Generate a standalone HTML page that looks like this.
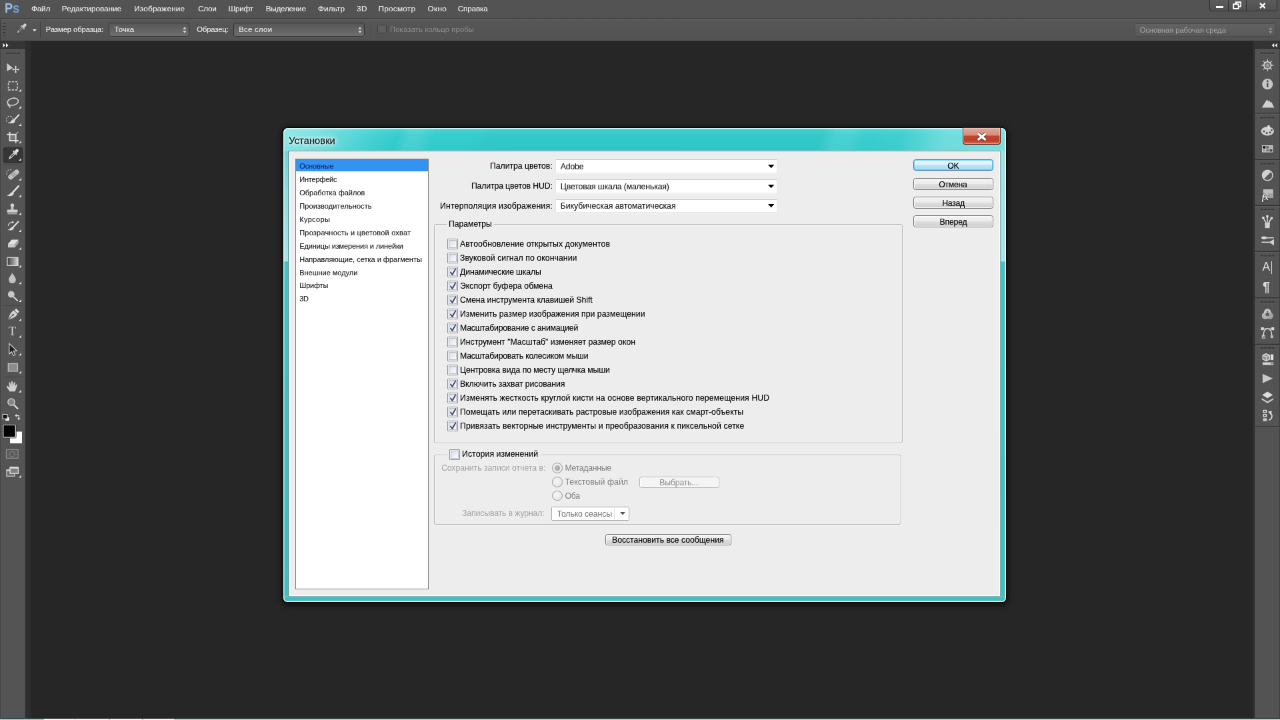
<!DOCTYPE html>
<html lang="ru"><head><meta charset="utf-8"><title>Установки</title>
<style>
*{box-sizing:border-box;margin:0;padding:0}
html,body{width:1280px;height:720px;overflow:hidden;background:#282828}
body{font-family:"Liberation Sans",sans-serif}
#root{position:absolute;left:0;top:0;width:1920px;height:1080px;transform:scale(0.6666667);transform-origin:0 0;overflow:hidden;background:#262626;will-change:transform}
#root div,#root svg{position:absolute}
.t{white-space:nowrap;line-height:21px;font-size:12px;color:#000}
.m{color:#f0f0f0;font-size:11.8px;-webkit-text-stroke:0.1px #f0f0f0}
.o{color:#eeeeee;font-size:11.3px;-webkit-text-stroke:0.1px #eee}
.od{color:#8e8e8e;font-size:11.3px}
.d,.b{font-size:12.3px;color:#000;-webkit-text-stroke:0.12px #000}
.dg{font-size:12.3px;color:#a3a3a3}
.l{font-size:11px;color:#000;-webkit-text-stroke:0.12px #111}
.tt{font-size:14.6px;color:#10262a}
.dis{color:#8c8c8c}
</style></head>
<body>
<div id="root">
<div style="left:0px;top:0px;width:1920px;height:27.3px;background:#535353"></div>
<div style="left:0px;top:27px;width:1920px;height:1.27px;background:#373737"></div>
<div style="left:0px;top:28.28px;width:1920px;height:1.27px;background:#6a6a6a"></div>
<div style="left:0px;top:29.4px;width:1920px;height:32.1px;background:linear-gradient(#575757,#525252)"></div>
<div style="left:0px;top:60.9px;width:1920px;height:1.05px;background:#2e2e2e"></div>
<div style="left:0px;top:29.4px;width:1.2px;height:32.1px;background:#3c3c3c"></div>
<div class="t" style="top:1.05px;left:7.05px;font-weight:bold;font-size:21px;transform:scaleX(0.86);transform-origin:0 50%;-webkit-text-stroke:0.3px #7aa5d8"><span style="color:#9bbde8">P</span><span style="color:#6e9bd0">s</span></div>
<div class="t m" style="top:2.85px;letter-spacing:-0.27px;left:47.1px;">Файл</div>
<div class="t m" style="top:2.85px;letter-spacing:-0.05px;left:92.85px;">Редактирование</div>
<div class="t m" style="top:2.85px;letter-spacing:0.17px;left:201.15px;">Изображение</div>
<div class="t m" style="top:2.85px;letter-spacing:-0.32px;left:297.15px;">Слои</div>
<div class="t m" style="top:2.85px;letter-spacing:-0.32px;left:342.45px;">Шрифт</div>
<div class="t m" style="top:2.85px;letter-spacing:-0.28px;left:398.7px;">Выделение</div>
<div class="t m" style="top:2.85px;letter-spacing:0.11px;left:477px;">Фильтр</div>
<div class="t m" style="top:2.85px;letter-spacing:0.32px;left:535.05px;">3D</div>
<div class="t m" style="top:2.85px;letter-spacing:0.21px;left:567.6px;">Просмотр</div>
<div class="t m" style="top:2.85px;letter-spacing:0.31px;left:641.55px;">Окно</div>
<div class="t m" style="top:2.85px;letter-spacing:-0.21px;left:686.7px;">Справка</div>
<div style="left:1814.4px;top:-1.5px;width:102px;height:18.9px;border:1px solid #2f2f2f;border-radius:0 0 3px 3px;background:linear-gradient(#5c5c5c,#505050)"></div>
<div style="left:1842.3px;top:0px;width:1.2px;height:16.95px;background:#2f2f2f"></div>
<div style="left:1869px;top:0px;width:1.2px;height:16.95px;background:#2f2f2f"></div>
<div style="left:1824px;top:9px;width:10.5px;height:2.55px;background:#fff"></div>
<svg style="left:1849.35px;top:2.25px;" width="12.9" height="11.4" viewBox="0 0 8.6 7.6"><path d="M3.2 0.8h5v4.4h-5z" fill="none" stroke="#fff" stroke-width="1.3"/><path d="M0.8 2.9h5v4.4h-5z" fill="#555" stroke="#fff" stroke-width="1.3"/></svg>
<svg style="left:1888.5px;top:3.9px;" width="9.6" height="9" viewBox="0 0 6.4 6"><path d="M0.6 0.6 L5.8 5.4 M5.8 0.6 L0.6 5.4" stroke="#fff" stroke-width="1.5" fill="none"/></svg>
<div style="left:4.35px;top:34.5px;width:3.3px;height:1.95px;background:#383838"></div>
<div style="left:4.35px;top:39px;width:3.3px;height:1.95px;background:#383838"></div>
<div style="left:4.35px;top:43.5px;width:3.3px;height:1.95px;background:#383838"></div>
<div style="left:4.35px;top:48px;width:3.3px;height:1.95px;background:#383838"></div>
<div style="left:4.35px;top:52.5px;width:3.3px;height:1.95px;background:#383838"></div>
<svg style="left:22.5px;top:33.75px;" width="18" height="18" viewBox="0 0 12 12"><g transform="rotate(45 6 6)"><rect x="4.6" y="-0.6" width="2.8" height="4.2" rx="1.2" fill="#cfcfcf"/><rect x="3.6" y="3.2" width="4.8" height="1.6" fill="#bdbdbd"/><path d="M4.9 4.8h2.2v5.6l-1.1 2.2-1.1-2.2z" fill="#c4c4c4" stroke="#3a3a3a" stroke-width="0.5"/><path d="M6 5.4v4.4" stroke="#333" stroke-width="0.8"/></g></svg>
<svg style="left:48.9px;top:43.5px;" width="5.7" height="3.3" viewBox="0 0 3.8 2.2"><path d="M0 0h3.8L1.9 2.2z" fill="#e8e8e8"/></svg>
<div style="left:60.3px;top:33px;width:1.05px;height:22.5px;background:#3a3a3a"></div>
<div style="left:61.35px;top:33px;width:1.05px;height:22.5px;background:#5c5c5c"></div>
<div class="t o" style="top:33.9px;letter-spacing:-0.12px;left:68.85px;">Размер образца:</div>
<div style="left:163.05px;top:33.9px;width:120.6px;height:20.7px;border:1px solid #303030;border-radius:3.5px;background:linear-gradient(#575757,#6d6d6d);box-shadow:0 1px 0 rgba(255,255,255,0.10)"></div>
<div class="t o" style="top:33.9px;letter-spacing:0.03px;left:171.6px;">Точка</div>
<svg style="left:272.64px;top:38.91px;" width="7.92" height="11.88" viewBox="0 0 6 9"><path d="M3 0.9 L5 3.6 H1Z M3 8.1 L5 5.4 H1Z" fill="#d8d8d8"/></svg>
<div class="t o" style="top:33.9px;letter-spacing:-0.18px;left:295.35px;">Образец:</div>
<div style="left:350.25px;top:33.9px;width:196.5px;height:20.7px;border:1px solid #303030;border-radius:3.5px;background:linear-gradient(#575757,#6d6d6d);box-shadow:0 1px 0 rgba(255,255,255,0.10)"></div>
<div class="t o" style="top:33.9px;letter-spacing:0.32px;left:358.2px;">Все слои</div>
<svg style="left:535.59px;top:38.91px;" width="7.92" height="11.88" viewBox="0 0 6 9"><path d="M3 0.9 L5 3.6 H1Z M3 8.1 L5 5.4 H1Z" fill="#d8d8d8"/></svg>
<div style="left:555.9px;top:33px;width:1.05px;height:22.5px;background:#3a3a3a"></div>
<div style="left:556.95px;top:33px;width:1.05px;height:22.5px;background:#5c5c5c"></div>
<div style="left:566.1px;top:36.9px;width:14.1px;height:13.5px;border:1px solid #3c3c3c;border-radius:1.5px;background:#5e5e5e"></div>
<div class="t od" style="top:33.9px;letter-spacing:0.11px;left:585px;">Показать кольцо пробы</div>
<div style="left:1702.2px;top:35.4px;width:210.6px;height:19.2px;border:1px solid #4a4a4a;border-radius:2px;background:linear-gradient(#626262,#595959)"></div>
<div class="t od" style="top:34.5px;letter-spacing:-0.13px;left:1709.7px;color:#a8a8a8">Основная рабочая среда</div>
<svg style="left:1901.78px;top:39.56px;" width="7.65" height="11.47" viewBox="0 0 6 9"><path d="M3 0.9 L5 3.6 H1Z M3 8.1 L5 5.4 H1Z" fill="#9a9a9a"/></svg>
<div style="left:0px;top:1077.15px;width:1920px;height:0.75px;background:#1c1c1c"></div>
<div style="left:0px;top:1077.9px;width:1920px;height:2.1px;background:linear-gradient(#79c7c7,#a9dede)"></div>
<div style="left:0px;top:1077.9px;width:66px;height:2.1px;background:linear-gradient(#63c5c5,#8fdada)"></div>
<div style="left:66px;top:1077.9px;width:45.9px;height:2.1px;background:#eef6f6"></div>
<div style="left:113.4px;top:1077.9px;width:49.8px;height:2.1px;background:#eef6f6"></div>
<div style="left:164.7px;top:1077.9px;width:48.3px;height:2.1px;background:#eef6f6"></div>
<div style="left:214.5px;top:1077.9px;width:46.5px;height:2.1px;background:#eef6f6"></div>
<div style="left:0px;top:61.5px;width:37.95px;height:1015.5px;background:#545454"></div>
<div style="left:0px;top:61.5px;width:1.35px;height:1015.5px;background:#3f3f3f"></div>
<div style="left:1.35px;top:72.9px;width:1.05px;height:1005px;background:#5d5d5d"></div>
<div style="left:36.9px;top:72.9px;width:1.2px;height:1005px;background:#494949"></div>
<div style="left:38.1px;top:61.2px;width:9.3px;height:1015.5px;background:linear-gradient(90deg,#2a2a2a 0%,#2f2f2f 30%,#2d2d2d 80%,#272727 100%)"></div>
<div style="left:0px;top:61.2px;width:38.1px;height:11.4px;background:#353535"></div>
<div style="left:0px;top:72.3px;width:38.1px;height:1.05px;background:#2b2b2b"></div>
<svg style="left:0px;top:61.5px;" width="40.5" height="660" viewBox="0 41 27 440"><path d="M3 42.9L5.4 45 3 47.1z M6 42.9L8.4 45 6 47.1z" fill="#ececec"/><rect x="6.00" y="52.5" width="2.7" height="1.4" fill="#353535"/><rect x="6.00" y="53.9" width="2.7" height="0.7" fill="#646464"/><rect x="9.70" y="52.5" width="2.7" height="1.4" fill="#353535"/><rect x="9.70" y="53.9" width="2.7" height="0.7" fill="#646464"/><rect x="13.40" y="52.5" width="2.7" height="1.4" fill="#353535"/><rect x="13.40" y="53.9" width="2.7" height="0.7" fill="#646464"/><rect x="17.10" y="52.5" width="2.7" height="1.4" fill="#353535"/><rect x="17.10" y="53.9" width="2.7" height="0.7" fill="#646464"/><path d="M7 62.8V70.8L12.8 67.6z" fill="#cdcdcd"/><path d="M12.9 69.1H18.5M15.7 66.2V72" stroke="#dadada" stroke-width="0.9" fill="none"/><path d="M15.7 65.4l1.3 1.5h-2.6z M15.7 72.8l1.3-1.5h-2.6z M12.1 69.1l1.5-1.3v2.6z M19.3 69.1l-1.5-1.3v2.6z" fill="#dadada"/><rect x="8.4" y="81.4" width="9" height="8.2" fill="none" stroke="#cfcfcf" stroke-width="1.1" stroke-dasharray="2.1 1.35"/><path d="M21.3 88.70V91.30H18.70z" fill="#e2e2e2"/><ellipse cx="12.9" cy="101.4" rx="5.5" ry="3.5" transform="rotate(-12 12.9 101.4)" fill="none" stroke="#d2d2d2" stroke-width="1.1"/><path d="M8.6 103.6c-1 .6-.7 1.7.4 1.9c1 .2 1.4 1 .5 2.1" fill="none" stroke="#d2d2d2" stroke-width="0.9"/><path d="M21.3 105.50V108.10H18.70z" fill="#e2e2e2"/><circle cx="9.7" cy="119.3" r="3.4" fill="none" stroke="#c4c4c4" stroke-width="0.8" stroke-dasharray="1.5 1.2"/><path d="M18.8 114.6L13.8 120" stroke="#e0e0e0" stroke-width="1.5" stroke-linecap="round"/><path d="M14.6 119.6c.9 1.2.1 2.7-1.6 3.2c-1.6.5-3.4.1-4.4-.6c1.4-.2 2.2-.9 2.8-1.9c.7-1.2 2.1-1.6 3.2-.7z" fill="#dcdcdc"/><path d="M21.3 123.00V125.60H18.70z" fill="#e2e2e2"/><rect x="10.4" y="135" width="4.6" height="4.4" fill="#7a7a7a"/><path d="M9.7 131.6V140.3H18.6M7 134.1H15.8V142.6" fill="none" stroke="#dedede" stroke-width="1.3"/><path d="M16.3 133.5L18.3 131.6" stroke="#bdbdbd" stroke-width="0.8"/><path d="M21.3 140.30V142.90H18.70z" fill="#e2e2e2"/><rect x="3.5" y="147.2" width="19" height="15.2" rx="1.6" fill="#363636" stroke="#2c2c2c" stroke-width="0.6"/><g transform="translate(13.1 154.3) rotate(45)"><rect x="-1.5" y="-7.2" width="3" height="4.2" rx="1.3" fill="#e2e2e2"/><rect x="-2.5" y="-3.5" width="5" height="1.7" fill="#d0d0d0"/><path d="M-1.2 -1.8h2.4v5.6l-1.2 2.6l-1.2-2.6z" fill="#d6d6d6"/><path d="M0 -1v4.6" stroke="#3a3a3a" stroke-width="0.8"/></g><path d="M21.3 157.80V160.40H18.70z" fill="#e2e2e2"/><rect x="3.4" y="164.3" width="19.4" height="0.6" fill="#444"/><path d="M6.8 174.5c-.6-2.8.6-5 2.8-5.2c1.200-.1 2 .5 2.400 1.500" fill="none" stroke="#bdbdbd" stroke-width="0.8" stroke-dasharray="1.4 1"/><g transform="translate(13.6 174.2) rotate(-40)"><rect x="-6.2" y="-2.4" width="12.4" height="4.8" rx="2.2" fill="#cfcfcf"/><rect x="-2.3" y="-2.4" width="4.6" height="4.8" fill="#a9a9a9"/><path d="M-5 -1h2M-5 1h2M3 -1h2M3 1h2" stroke="#8a8a8a" stroke-width="0.6"/></g><path d="M21.3 177.50V180.10H18.70z" fill="#e2e2e2"/><path d="M18.6 185.8L12.6 192.2" stroke="#e0e0e0" stroke-width="1.7" stroke-linecap="round"/><path d="M13.300 192.300c.8 1.200.300 2.500-1.200 3.100c-1.800.700-4 .500-5.500-.200c1.600-.300 2.600-1 3.300-1.900c.9-1.200 2.400-1.700 3.400-1z" fill="#dadada"/><path d="M21.3 194.20V196.80H18.70z" fill="#e2e2e2"/><circle cx="12.3" cy="205" r="1.9" fill="#d0d0d0"/><path d="M11.300 206h2l.5 3.500h-3z" fill="#c6c6c6"/><rect x="7.100" y="209.400" width="10.500" height="2.800" rx="0.500" fill="#d0d0d0"/><rect x="7.600" y="213" width="9.500" height="0.900" fill="#bdbdbd"/><path d="M21.3 212.00V214.60H18.70z" fill="#e2e2e2"/><path d="M18.300 221.300L13 227" stroke="#e0e0e0" stroke-width="1.500" stroke-linecap="round"/><path d="M13.500 227c.700 1 .200 2.200-1.100 2.700c-1.500.600-3.600.400-4.800-.200c1.400-.200 2.200-.800 2.800-1.600c.800-1.100 2.200-1.600 3.100-.900z" fill="#dadada"/><path d="M8.200 225.600c.2-2.200 2-3.700 4.300-3.700" fill="none" stroke="#cfcfcf" stroke-width="1"/><path d="M12 220.500l2.200 1.400l-2.200 1.400z" fill="#cfcfcf"/><path d="M21.3 229.00V231.60H18.70z" fill="#e2e2e2"/><path d="M11.700 239.300h6.800l-3.600 4.300h-6.900z" fill="#e2e2e2"/><path d="M8 243.600h6.900v3.600h-6.900z" fill="#cacaca"/><path d="M14.900 243.600l3.600-4.300v3.300l-3.600 4.600z" fill="#a8a8a8"/><path d="M21.3 246.80V249.40H18.70z" fill="#e2e2e2"/><defs><linearGradient id="gr1" x1="0" x2="1" y1="0" y2="0"><stop offset="0" stop-color="#3c3c3c"/><stop offset="1" stop-color="#d8d8d8"/></linearGradient></defs><rect x="7.300" y="257.200" width="10.700" height="8" fill="url(#gr1)" stroke="#d6d6d6" stroke-width="0.9"/><path d="M21.3 264.50V267.10H18.70z" fill="#e2e2e2"/><path d="M12.300 272.600c1.600 2.500 3.600 4.500 3.600 6.800a3.600 3.600 0 0 1-7.200 0c0-2.300 2-4.300 3.600-6.800z" fill="#c2c2c2"/><path d="M21.3 281.30V283.90H18.70z" fill="#e2e2e2"/><circle cx="11.200" cy="294" r="3.300" fill="#c8c8c8"/><path d="M13.500 296.500L17.400 300.200" stroke="#d6d6d6" stroke-width="1.300" stroke-linecap="round"/><path d="M21.3 299.00V301.60H18.70z" fill="#e2e2e2"/><rect x="3.400" y="304.900" width="19.400" height="0.6" fill="#444"/><g transform="translate(12.900 314.600) rotate(45)"><path d="M-2.200 -6.800h4.400v2.300h-4.400z" fill="#dedede"/><path d="M-2.600 -3.800h5.200c.8 2.600 0 6-2.600 10.200c-2.600-4.200-3.400-7.600-2.600-10.200z" fill="#d2d2d2"/><path d="M0 0.400v5" stroke="#4a4a4a" stroke-width="0.700"/><circle cx="0" cy="-0.300" r="0.900" fill="#4a4a4a"/></g><path d="M21.3 318.00V320.60H18.70z" fill="#e2e2e2"/><path d="M9.200 343.200v10.400l2.500-2.300l1.700 3.900l1.800-.8l-1.700-3.800h3.400z" fill="#1c1c1c" stroke="#c9c9c9" stroke-width="0.900" stroke-linejoin="round"/><path d="M21.3 352.50V355.10H18.70z" fill="#e2e2e2"/><rect x="8.200" y="363.300" width="9.400" height="7.600" fill="#8b8b8b" stroke="#bfbfbf" stroke-width="0.900"/><path d="M21.3 370.50V373.10H18.70z" fill="#e2e2e2"/><rect x="3.400" y="376.300" width="19.400" height="0.6" fill="#444"/><path d="M9.600 391.200c-1-1.700-2.300-3.300-2.800-4.500c-.3-.9.700-1.400 1.400-.700l1.300 1.500l-.5-4.600c-.1-1 1.200-1.200 1.400-.200l.700 3.300l.1-4.300c0-1 1.400-1 1.500 0l.2 4.200l.9-3.600c.3-.9 1.500-.6 1.400.3l-.5 4l1.200-2.200c.5-.8 1.600-.3 1.300.6c-.6 1.800-1.300 4.300-2.200 6.200z" fill="#d0d0d0"/><path d="M21.3 389.50V392.10H18.70z" fill="#e2e2e2"/><circle cx="11.300" cy="401.700" r="3.400" fill="#878787" stroke="#c9c9c9" stroke-width="1"/><path d="M13.900 404.500L17.600 408.200" stroke="#d6d6d6" stroke-width="1.600" stroke-linecap="round"/><rect x="5.200" y="416.600" width="4.400" height="4.200" fill="#f2f2f2" stroke="#2a2a2a" stroke-width="0.500"/><rect x="2.700" y="414" width="4.600" height="4.400" fill="#111" stroke="#d8d8d8" stroke-width="0.700"/><path d="M16.200 415.200h2.600v3.200" fill="none" stroke="#dcdcdc" stroke-width="0.900"/><path d="M16.700 413.600v3.200l-2-1.600z M17.200 417.900h3.200l-1.600 2z" fill="#dcdcdc"/><rect x="9.700" y="431" width="12.600" height="12.400" fill="#fff" stroke="#3a3a3a" stroke-width="0.500"/><rect x="3.100" y="424.600" width="12.400" height="12.400" rx="0.800" fill="#000" stroke="#e2e2e2" stroke-width="0.900"/><rect x="2.400" y="423.900" width="13.800" height="13.800" rx="1" fill="none" stroke="#333" stroke-width="0.500"/><rect x="6.300" y="449.300" width="11.800" height="8.600" fill="#5c5c5c" stroke="#8f8f8f" stroke-width="0.800"/><circle cx="12.200" cy="453.600" r="2.600" fill="none" stroke="#8f8f8f" stroke-width="0.800" stroke-dasharray="1.300 0.900"/><rect x="6.600" y="469.500" width="8" height="6.300" fill="#6a6a6a" stroke="#cdcdcd" stroke-width="0.800"/><rect x="6.600" y="469.500" width="8" height="1.300" fill="#cdcdcd"/><rect x="10" y="466.800" width="8.200" height="6.300" fill="#808080" stroke="#dedede" stroke-width="0.900"/><rect x="10" y="466.800" width="8.200" height="1.400" fill="#dedede"/><path d="M21.3 474.70V477.30H18.70z" fill="#e2e2e2"/></svg>
<div class="t" style="top:486.9px;left:12.3px;font-family:'Liberation Serif',serif;font-size:18px;color:#d6d6d6;left:12.9px">T</div>
<svg style="left:0px;top:480px;" width="40.5" height="36" viewBox="0 320 27 24"><path d="M21.3 335.00V337.60H18.70z" fill="#e2e2e2"/></svg>
<div style="left:1882.2px;top:61.5px;width:37.8px;height:1015.5px;background:#535353"></div>
<div style="left:1878.6px;top:61.5px;width:3.6px;height:1015.5px;background:#303030"></div>
<div style="left:1882.2px;top:72.9px;width:1.2px;height:1005px;background:#484848"></div>
<div style="left:1918.8px;top:61.5px;width:1.2px;height:1015.5px;background:#3c3c3c"></div>
<div style="left:1882.2px;top:61.5px;width:37.8px;height:10.95px;background:#343434"></div>
<div style="left:1882.2px;top:72.45px;width:37.8px;height:1.05px;background:#2b2b2b"></div>
<svg style="left:1878px;top:61.5px;" width="42" height="585" viewBox="1252 41 28 390"><path d="M1277.2 42.9L1274.8 45 1277.2 47.100z M1274.200 42.900L1271.800 45 1274.200 47.100z" fill="#ececec"/><rect x="1254.8" y="112.50" width="25.2" height="0.9" fill="#2e2e2e"/><rect x="1254.8" y="113.40" width="25.2" height="0.7" fill="#5f5f5f"/><rect x="1254.8" y="159.00" width="25.2" height="0.9" fill="#2e2e2e"/><rect x="1254.8" y="159.90" width="25.2" height="0.7" fill="#5f5f5f"/><rect x="1254.8" y="204.80" width="25.2" height="0.9" fill="#2e2e2e"/><rect x="1254.8" y="205.70" width="25.2" height="0.7" fill="#5f5f5f"/><rect x="1254.8" y="250.80" width="25.2" height="0.9" fill="#2e2e2e"/><rect x="1254.8" y="251.70" width="25.2" height="0.7" fill="#5f5f5f"/><rect x="1254.8" y="297.20" width="25.2" height="0.9" fill="#2e2e2e"/><rect x="1254.8" y="298.10" width="25.2" height="0.7" fill="#5f5f5f"/><rect x="1254.8" y="343.50" width="25.2" height="0.9" fill="#2e2e2e"/><rect x="1254.8" y="344.40" width="25.2" height="0.7" fill="#5f5f5f"/><rect x="1254.8" y="426.00" width="25.2" height="0.9" fill="#2e2e2e"/><rect x="1254.8" y="426.90" width="25.2" height="0.7" fill="#5f5f5f"/><rect x="1260.60" y="52.30" width="2.700" height="1.400" fill="#353535"/><rect x="1260.60" y="53.70" width="2.700" height="0.700" fill="#646464"/><rect x="1264.30" y="52.30" width="2.700" height="1.400" fill="#353535"/><rect x="1264.30" y="53.70" width="2.700" height="0.700" fill="#646464"/><rect x="1268.00" y="52.30" width="2.700" height="1.400" fill="#353535"/><rect x="1268.00" y="53.70" width="2.700" height="0.700" fill="#646464"/><rect x="1271.70" y="52.30" width="2.700" height="1.400" fill="#353535"/><rect x="1271.70" y="53.70" width="2.700" height="0.700" fill="#646464"/><rect x="1260.60" y="116.80" width="2.700" height="1.400" fill="#353535"/><rect x="1260.60" y="118.20" width="2.700" height="0.700" fill="#646464"/><rect x="1264.30" y="116.80" width="2.700" height="1.400" fill="#353535"/><rect x="1264.30" y="118.20" width="2.700" height="0.700" fill="#646464"/><rect x="1268.00" y="116.80" width="2.700" height="1.400" fill="#353535"/><rect x="1268.00" y="118.20" width="2.700" height="0.700" fill="#646464"/><rect x="1271.70" y="116.80" width="2.700" height="1.400" fill="#353535"/><rect x="1271.70" y="118.20" width="2.700" height="0.700" fill="#646464"/><rect x="1260.60" y="162.80" width="2.700" height="1.400" fill="#353535"/><rect x="1260.60" y="164.20" width="2.700" height="0.700" fill="#646464"/><rect x="1264.30" y="162.80" width="2.700" height="1.400" fill="#353535"/><rect x="1264.30" y="164.20" width="2.700" height="0.700" fill="#646464"/><rect x="1268.00" y="162.80" width="2.700" height="1.400" fill="#353535"/><rect x="1268.00" y="164.20" width="2.700" height="0.700" fill="#646464"/><rect x="1271.70" y="162.80" width="2.700" height="1.400" fill="#353535"/><rect x="1271.70" y="164.20" width="2.700" height="0.700" fill="#646464"/><rect x="1260.60" y="208.60" width="2.700" height="1.400" fill="#353535"/><rect x="1260.60" y="210.00" width="2.700" height="0.700" fill="#646464"/><rect x="1264.30" y="208.60" width="2.700" height="1.400" fill="#353535"/><rect x="1264.30" y="210.00" width="2.700" height="0.700" fill="#646464"/><rect x="1268.00" y="208.60" width="2.700" height="1.400" fill="#353535"/><rect x="1268.00" y="210.00" width="2.700" height="0.700" fill="#646464"/><rect x="1271.70" y="208.60" width="2.700" height="1.400" fill="#353535"/><rect x="1271.70" y="210.00" width="2.700" height="0.700" fill="#646464"/><rect x="1260.60" y="254.80" width="2.700" height="1.400" fill="#353535"/><rect x="1260.60" y="256.20" width="2.700" height="0.700" fill="#646464"/><rect x="1264.30" y="254.80" width="2.700" height="1.400" fill="#353535"/><rect x="1264.30" y="256.20" width="2.700" height="0.700" fill="#646464"/><rect x="1268.00" y="254.80" width="2.700" height="1.400" fill="#353535"/><rect x="1268.00" y="256.20" width="2.700" height="0.700" fill="#646464"/><rect x="1271.70" y="254.80" width="2.700" height="1.400" fill="#353535"/><rect x="1271.70" y="256.20" width="2.700" height="0.700" fill="#646464"/><rect x="1260.60" y="301.00" width="2.700" height="1.400" fill="#353535"/><rect x="1260.60" y="302.40" width="2.700" height="0.700" fill="#646464"/><rect x="1264.30" y="301.00" width="2.700" height="1.400" fill="#353535"/><rect x="1264.30" y="302.40" width="2.700" height="0.700" fill="#646464"/><rect x="1268.00" y="301.00" width="2.700" height="1.400" fill="#353535"/><rect x="1268.00" y="302.40" width="2.700" height="0.700" fill="#646464"/><rect x="1271.70" y="301.00" width="2.700" height="1.400" fill="#353535"/><rect x="1271.70" y="302.40" width="2.700" height="0.700" fill="#646464"/><rect x="1260.60" y="347.00" width="2.700" height="1.400" fill="#353535"/><rect x="1260.60" y="348.40" width="2.700" height="0.700" fill="#646464"/><rect x="1264.30" y="347.00" width="2.700" height="1.400" fill="#353535"/><rect x="1264.30" y="348.40" width="2.700" height="0.700" fill="#646464"/><rect x="1268.00" y="347.00" width="2.700" height="1.400" fill="#353535"/><rect x="1268.00" y="348.40" width="2.700" height="0.700" fill="#646464"/><rect x="1271.70" y="347.00" width="2.700" height="1.400" fill="#353535"/><rect x="1271.70" y="348.40" width="2.700" height="0.700" fill="#646464"/><path d="M1269.10 65.00L1273.50 65.00M1268.63 66.13L1271.74 69.24M1267.50 66.60L1267.50 71.00M1266.37 66.13L1263.26 69.24M1265.90 65.00L1261.50 65.00M1266.37 63.87L1263.26 60.76M1267.50 63.40L1267.50 59.00M1268.63 63.87L1271.74 60.76" stroke="#cacaca" stroke-width="0.9"/><circle cx="1267.5" cy="65" r="3.6" fill="#767676" stroke="#cfcfcf" stroke-width="1.1"/><circle cx="1267.5" cy="65" r="1.3" fill="#a8a8a8"/><circle cx="1267.5" cy="83.8" r="5.4" fill="#c6c6c6"/><rect x="1266.7" y="82.7" width="1.600" height="4.200" fill="#4a4a4a"/><circle cx="1267.5" cy="80.89999999999999" r="1" fill="#4a4a4a"/><path d="M1261.800 107.300L1265.800 100.800L1267.200 99.400L1268.200 101.200L1269.300 100.200L1270.600 102.200L1271.600 101.800L1274.200 107.300z" fill="#cfcfcf"/><ellipse cx="1267.5" cy="130.8" rx="6.5" ry="4.5" fill="#d0d0d0"/><path d="M1267.300 125.200l.8 4.200h1.400l.4-4.200z" fill="#e0e0e0"/><circle cx="1264" cy="131" r="1" fill="#555"/><circle cx="1266.800" cy="132.600" r="1" fill="#555"/><circle cx="1270" cy="132.200" r="1" fill="#555"/><circle cx="1271.600" cy="129.800" r="0.900" fill="#555"/><rect x="1262" y="145" width="11" height="7" fill="#cfcfcf"/><rect x="1262.800" y="145.800" width="2.700" height="2.400" fill="#111"/><rect x="1266.200" y="145.800" width="2.700" height="2.400" fill="#666"/><rect x="1269.600" y="145.800" width="2.700" height="2.400" fill="#aaa"/><rect x="1262.800" y="149" width="2.700" height="2.300" fill="#999"/><rect x="1266.200" y="149" width="2.700" height="2.300" fill="#777"/><rect x="1269.600" y="149" width="2.700" height="2.300" fill="#444"/><circle cx="1267.5" cy="175" r="5.200" fill="#5a5a5a" stroke="#cfcfcf" stroke-width="1"/><path d="M1263.82 178.68A5.200 5.200 0 0 1 1271.18 171.32z" fill="#d0d0d0"/><rect x="1263.200" y="189" width="10" height="8.600" fill="#bdbdbd"/><rect x="1268" y="193" width="5.200" height="4.600" fill="#a2a2a2"/><path d="M1264.800 222h5.200l-.4 5.800h-4.400z" fill="#cfcfcf"/><path d="M1265.600 222L1263.400 217.600M1267.300 222V216.200M1269 222L1271.400 218" stroke="#d4d4d4" stroke-width="1.100"/><circle cx="1263.200" cy="217.400" r="1.300" fill="#d4d4d4"/><circle cx="1267.300" cy="216" r="1.300" fill="#d4d4d4"/><circle cx="1271.600" cy="217.800" r="1.300" fill="#d4d4d4"/><path d="M1261.400 236.800c1.400-1.200 3.800-1.200 5.400.200h7v1h-7c-1.600 1.400-4 1.400-5.400 0z" fill="#d6d6d6"/><path d="M1261.600 241.300h8.400l4-2.400v6.200l-4-2.600h-8.400z" fill="#d0d0d0"/><circle cx="1267.5" cy="311.9" r="3.500" fill="#e0e0e0" fill-opacity=".85"/><circle cx="1265.3" cy="315.3" r="3.500" fill="#c2c2c2" fill-opacity=".85"/><circle cx="1269.7" cy="315.3" r="3.500" fill="#b0b0b0" fill-opacity=".85"/><circle cx="1267.5" cy="314.0" r="1.900" fill="#5c5c5c"/><circle cx="1267.5" cy="311.1" r="1.100" fill="#8a8a8a"/><path d="M1263.400 336.400c0-5.400 1.600-8 4.200-8s4.200 2.600 4.200 8" fill="none" stroke="#d6d6d6" stroke-width="1"/><path d="M1262.200 328.400h10.800" stroke="#cfcfcf" stroke-width="0.800"/><rect x="1261" y="327" width="2.800" height="2.800" fill="#dadada"/><rect x="1271.400" y="327" width="2.800" height="2.800" fill="#dadada"/><rect x="1262.200" y="335.200" width="2.600" height="2.600" fill="none" stroke="#d0d0d0" stroke-width="0.700"/><rect x="1270.600" y="335.200" width="2.600" height="2.600" fill="#bdbdbd"/><path d="M1266.200 353.400l3.400 1.500v4l-3.400 1.700l-3.400-1.700v-4z" fill="#8f8f8f" stroke="#dadada" stroke-width="0.900"/><path d="M1262.800 354.900l3.400 1.500l3.400-1.500M1266.200 356.400v4.200" fill="none" stroke="#dadada" stroke-width="0.700"/><rect x="1270.600" y="354" width="2.800" height="5.800" fill="#e0e0e0"/><rect x="1262.600" y="362" width="10.800" height="2.600" fill="#d6d6d6"/><rect x="1271" y="362.800" width="1.600" height="1" fill="#555"/><path d="M1262.600 373.500L1272.800 378.200L1262.600 382.800z" fill="#c9c9c9"/><path d="M1261.700 397.700L1267.500 401.200L1273.300 397.700V399.400L1267.500 403L1261.700 399.400z" fill="#c6c6c6"/><path d="M1267.500 391l5.800 3.600l-5.800 3.600l-5.800-3.600z" fill="#dedede" stroke="#4a4a4a" stroke-width="0.500"/><rect x="1263" y="409.500" width="3.800" height="3" fill="#dadada"/><rect x="1263" y="413.700" width="3.800" height="3" fill="#dadada"/><rect x="1263" y="417.900" width="3.800" height="3" fill="#c8c8c8"/><rect x="1264" y="410.400" width="1.800" height="1.200" fill="#555"/><rect x="1264" y="414.600" width="1.800" height="1.200" fill="#555"/><path d="M1268.800 419.800c3.400-1 4.200-4.600 1.600-7.400" fill="none" stroke="#d6d6d6" stroke-width="1.200"/><path d="M1268 411.200l4-.4l-1.400 3.600z" fill="#dedede"/></svg>
<div class="t" style="top:286.35px;left:1892.7px;font-family:'Liberation Serif',serif;font-style:italic;font-weight:bold;font-size:12.5px;color:#f4f4f4;text-shadow:0 0 1px #333,0 0 1.5px #333,0 0 2px #333">fx</div>
<div class="t" style="top:390.45px;left:1893.6px;font-size:17.5px;color:#dcdcdc">A</div>
<div style="left:1906.95px;top:392.1px;width:1.2px;height:18.6px;background:#dcdcdc"></div>
<div class="t" style="top:419.7px;left:1893.9px;font-size:19.5px;color:#dcdcdc;font-weight:bold">¶</div>
<div style="left:424.65px;top:192.45px;width:1084.8px;height:710.1px;border-radius:7px 7px 6px 6px;box-shadow:0 0 0 1px rgba(0,0,0,.85),0 2px 9px 3px rgba(0,0,0,.6)"></div>
<div style="left:424.65px;top:192.45px;width:1084.8px;height:710.1px;border-radius:7px 7px 6px 6px;background:#3fc2c3;overflow:hidden"><div style="left:0px;top:0px;width:1084.8px;height:35.1px;background:linear-gradient(108deg,rgba(215,250,250,.55) 0%,rgba(200,246,247,.5) 4%,rgba(170,238,240,.34) 9%,rgba(150,232,234,.14) 13%,rgba(255,255,255,0) 16%,rgba(255,255,255,.10) 17.5%,rgba(255,255,255,.10) 19%,rgba(255,255,255,0) 21%,rgba(0,60,60,0) 26%,rgba(0,70,70,.03) 29%,rgba(0,70,70,.03) 74%,rgba(255,255,255,.10) 76%,rgba(255,255,255,.10) 78%,rgba(255,255,255,.02) 80%,rgba(255,255,255,.05) 85%,rgba(225,250,250,.34) 91%,rgba(225,250,250,.42) 100%),linear-gradient(#4cd3d5 0%,#36cdcd 30%,#31c9ca 100%)"></div>
<div style="left:6px;top:32.1px;width:1072.8px;height:1.2px;background:rgba(225,252,252,.45)"></div>
<div style="left:0px;top:34.05px;width:8.4px;height:676.05px;background:linear-gradient(180deg,#6ed4d6 0,#8adcdf 60px,#a8e4e7 165.75px,#3fc3c4 166.8px,#3cc0c1 100%)"></div>
<div style="left:1074.9px;top:34.05px;width:9.9px;height:676.05px;background:linear-gradient(180deg,#9fe0e3 0,#a6e3e6 165.75px,#3fc3c4 166.8px,#3cc0c1 100%)"></div>
<div style="left:0px;top:702px;width:1084.8px;height:8.1px;background:linear-gradient(#7fbcbb 0%,#45bdbe 30%,#3cc0c2 100%)"></div>
<div style="left:0px;top:0px;width:1084.8px;height:710.1px;border-radius:7px 7px 6px 6px;box-shadow:inset 0 0 0 1.5px rgba(235,255,255,.85)"></div>
</div>
<div style="left:431.85px;top:225.9px;width:1069.05px;height:669.6px;background:#ededed;border:1px solid rgba(30,105,108,.8);border-top-color:rgba(20,80,84,.85);border-right-color:rgba(110,165,165,.85);border-bottom-color:rgba(120,172,172,.85);box-shadow:inset 0 0 0 1px rgba(255,255,255,.9)"></div>
<div class="t tt" style="top:200.55px;letter-spacing:0.09px;left:433.35px;-webkit-text-stroke:0.3px #10262a;text-shadow:0 0 4px #fff,0 0 7px rgba(255,255,255,.9),0 0 10px rgba(255,255,255,.8),0 0 14px rgba(255,255,255,.55)">Установки</div>
<div style="left:1443.9px;top:191.7px;width:57.3px;height:25.2px;border:1px solid #5a1c14;border-top:none;border-radius:0 0 4px 4px;background:linear-gradient(#e2aa9c 0%,#d68c7c 45%,#c4452b 50%,#bd3f27 80%,#d47257 100%);box-shadow:inset 0 0 0 1px rgba(255,255,255,.35),0 0 2px rgba(255,255,255,.6)"></div>
<svg style="left:1464.3px;top:198px;" width="17.4" height="14.1" viewBox="0 0 11.6 9.4"><path d="M1.9 1.5 L9.7 7.9 M9.7 1.5 L1.9 7.9" stroke="#5b2a25" stroke-opacity=".8" stroke-width="3.6" fill="none"/><path d="M1.9 1.5 L9.7 7.9 M9.7 1.5 L1.9 7.9" stroke="#fff" stroke-width="2.3" fill="none"/></svg>
<div style="left:443.4px;top:237.6px;width:199.8px;height:646.5px;background:#fff;border:1px solid #7c7c7c"></div>
<div style="left:444.45px;top:238.5px;width:197.85px;height:18px;background:#3393f3"></div>
<div class="t l" style="top:238.8px;letter-spacing:-0.12px;left:449.25px;color:#0d2f8e;">Основные</div>
<div class="t l" style="top:258.76px;letter-spacing:-0.21px;left:449.25px;color:#1a1a1a;">Интерфейс</div>
<div class="t l" style="top:278.73px;letter-spacing:-0.01px;left:449.25px;color:#1a1a1a;">Обработка файлов</div>
<div class="t l" style="top:298.69px;letter-spacing:0.09px;left:449.25px;color:#1a1a1a;">Производительность</div>
<div class="t l" style="top:318.66px;letter-spacing:0.32px;left:449.25px;color:#1a1a1a;">Курсоры</div>
<div class="t l" style="top:338.62px;letter-spacing:0.19px;left:449.25px;color:#1a1a1a;">Прозрачность и цветовой охват</div>
<div class="t l" style="top:358.59px;letter-spacing:-0.12px;left:449.25px;color:#1a1a1a;">Единицы измерения и линейки</div>
<div class="t l" style="top:378.56px;letter-spacing:0.00px;left:449.25px;color:#1a1a1a;">Направляющие, сетка и фрагменты</div>
<div class="t l" style="top:398.52px;letter-spacing:-0.03px;left:449.25px;color:#1a1a1a;">Внешние модули</div>
<div class="t l" style="top:418.49px;letter-spacing:-0.20px;left:449.25px;color:#1a1a1a;">Шрифты</div>
<div class="t l" style="top:438.45px;letter-spacing:-0.32px;left:449.25px;color:#1a1a1a;">3D</div>
<div class="t d" style="top:238.95px;letter-spacing:-0.06px;left:735px;">Палитра цветов:</div>
<div style="left:833.4px;top:239.1px;width:332.4px;height:20.7px;background:#fff;border:1px solid #e4e4e4;border-top-color:#c9c9c9;border-radius:1px;box-shadow:0 1px 0 rgba(255,255,255,.6)"></div>
<div class="t d" style="top:239.7px;letter-spacing:-0.17px;left:840.75px;color:#1c1c1c">Adobe</div>
<svg style="left:1151.62px;top:246.68px;" width="9.45" height="5.25" viewBox="0 0 6.3 3.5"><path d="M0 0H6.3L3.15 3.5z" fill="#000"/></svg>
<div class="t d" style="top:268.8px;letter-spacing:-0.15px;left:706.88px;">Палитра цветов HUD:</div>
<div style="left:833.4px;top:268.95px;width:332.4px;height:20.7px;background:#fff;border:1px solid #e4e4e4;border-top-color:#c9c9c9;border-radius:1px;box-shadow:0 1px 0 rgba(255,255,255,.6)"></div>
<div class="t d" style="top:269.55px;letter-spacing:-0.16px;left:840.75px;color:#1c1c1c">Цветовая шкала (маленькая)</div>
<svg style="left:1151.62px;top:276.53px;" width="9.45" height="5.25" viewBox="0 0 6.3 3.5"><path d="M0 0H6.3L3.15 3.5z" fill="#000"/></svg>
<div class="t d" style="top:298.65px;letter-spacing:0.17px;left:660px;">Интерполяция изображения:</div>
<div style="left:833.4px;top:298.8px;width:332.4px;height:20.7px;background:#fff;border:1px solid #e4e4e4;border-top-color:#c9c9c9;border-radius:1px;box-shadow:0 1px 0 rgba(255,255,255,.6)"></div>
<div class="t d" style="top:299.4px;letter-spacing:-0.05px;left:840.75px;color:#1c1c1c">Бикубическая автоматическая</div>
<svg style="left:1151.62px;top:306.38px;" width="9.45" height="5.25" viewBox="0 0 6.3 3.5"><path d="M0 0H6.3L3.15 3.5z" fill="#000"/></svg>
<div style="left:651.15px;top:336.3px;width:702.6px;height:328.35px;border:1.3px solid #b2b2b2;border-radius:3px;box-shadow:1px 1px 0 rgba(255,255,255,.8), inset 1px 1px 0 rgba(255,255,255,.8)"></div>
<div style="left:669.9px;top:327px;width:71.4px;height:18px;background:#ededed"></div>
<div class="t d" style="top:326.1px;letter-spacing:-0.09px;left:673.12px;">Параметры</div>
<div style="left:670.8px;top:358.42px;width:15.9px;height:15.9px;border:1px solid #8f8f8f;border-radius:1px;background:linear-gradient(135deg,#d4d8de,#eef1f5 60%,#ffffff);box-shadow:inset 0 0 0 1px #f2f4f6, inset 0 0 0 2px #b9bdc4"></div>
<div class="t d" style="top:355.73px;letter-spacing:0.08px;left:690px;">Автообновление открытых документов</div>
<div style="left:670.8px;top:379.42px;width:15.9px;height:15.9px;border:1px solid #8f8f8f;border-radius:1px;background:linear-gradient(135deg,#d4d8de,#eef1f5 60%,#ffffff);box-shadow:inset 0 0 0 1px #f2f4f6, inset 0 0 0 2px #b9bdc4"></div>
<div class="t d" style="top:376.72px;letter-spacing:0.05px;left:690px;">Звуковой сигнал по окончании</div>
<div style="left:670.8px;top:400.42px;width:15.9px;height:15.9px;border:1px solid #8f8f8f;border-radius:1px;background:linear-gradient(135deg,#d4d8de,#eef1f5 60%,#ffffff);box-shadow:inset 0 0 0 1px #f2f4f6, inset 0 0 0 2px #b9bdc4"></div>
<svg style="left:673.5px;top:402.38px;" width="11.4" height="12" viewBox="0 0 7.6 8"><path d="M1.3 4.3 L3.0 6.7 L6.2 0.9" fill="none" stroke="#363d6e" stroke-width="1.2" stroke-linecap="round" stroke-linejoin="round"/></svg>
<div class="t d" style="top:397.72px;letter-spacing:-0.15px;left:690px;">Динамические шкалы</div>
<div style="left:670.8px;top:421.42px;width:15.9px;height:15.9px;border:1px solid #8f8f8f;border-radius:1px;background:linear-gradient(135deg,#d4d8de,#eef1f5 60%,#ffffff);box-shadow:inset 0 0 0 1px #f2f4f6, inset 0 0 0 2px #b9bdc4"></div>
<svg style="left:673.5px;top:423.38px;" width="11.4" height="12" viewBox="0 0 7.6 8"><path d="M1.3 4.3 L3.0 6.7 L6.2 0.9" fill="none" stroke="#363d6e" stroke-width="1.2" stroke-linecap="round" stroke-linejoin="round"/></svg>
<div class="t d" style="top:418.72px;letter-spacing:-0.01px;left:690px;">Экспорт буфера обмена</div>
<div style="left:670.8px;top:442.42px;width:15.9px;height:15.9px;border:1px solid #8f8f8f;border-radius:1px;background:linear-gradient(135deg,#d4d8de,#eef1f5 60%,#ffffff);box-shadow:inset 0 0 0 1px #f2f4f6, inset 0 0 0 2px #b9bdc4"></div>
<svg style="left:673.5px;top:444.38px;" width="11.4" height="12" viewBox="0 0 7.6 8"><path d="M1.3 4.3 L3.0 6.7 L6.2 0.9" fill="none" stroke="#363d6e" stroke-width="1.2" stroke-linecap="round" stroke-linejoin="round"/></svg>
<div class="t d" style="top:439.72px;letter-spacing:-0.10px;left:690px;">Смена инструмента клавишей Shift</div>
<div style="left:670.8px;top:463.42px;width:15.9px;height:15.9px;border:1px solid #8f8f8f;border-radius:1px;background:linear-gradient(135deg,#d4d8de,#eef1f5 60%,#ffffff);box-shadow:inset 0 0 0 1px #f2f4f6, inset 0 0 0 2px #b9bdc4"></div>
<svg style="left:673.5px;top:465.38px;" width="11.4" height="12" viewBox="0 0 7.6 8"><path d="M1.3 4.3 L3.0 6.7 L6.2 0.9" fill="none" stroke="#363d6e" stroke-width="1.2" stroke-linecap="round" stroke-linejoin="round"/></svg>
<div class="t d" style="top:460.72px;letter-spacing:-0.01px;left:690px;">Изменить размер изображения при размещении</div>
<div style="left:670.8px;top:484.42px;width:15.9px;height:15.9px;border:1px solid #8f8f8f;border-radius:1px;background:linear-gradient(135deg,#d4d8de,#eef1f5 60%,#ffffff);box-shadow:inset 0 0 0 1px #f2f4f6, inset 0 0 0 2px #b9bdc4"></div>
<svg style="left:673.5px;top:486.38px;" width="11.4" height="12" viewBox="0 0 7.6 8"><path d="M1.3 4.3 L3.0 6.7 L6.2 0.9" fill="none" stroke="#363d6e" stroke-width="1.2" stroke-linecap="round" stroke-linejoin="round"/></svg>
<div class="t d" style="top:481.72px;letter-spacing:-0.23px;left:690px;">Масштабирование с анимацией</div>
<div style="left:670.8px;top:505.42px;width:15.9px;height:15.9px;border:1px solid #8f8f8f;border-radius:1px;background:linear-gradient(135deg,#d4d8de,#eef1f5 60%,#ffffff);box-shadow:inset 0 0 0 1px #f2f4f6, inset 0 0 0 2px #b9bdc4"></div>
<div class="t d" style="top:502.72px;letter-spacing:-0.01px;left:690px;">Инструмент &quot;Масштаб&quot; изменяет размер окон</div>
<div style="left:670.8px;top:526.42px;width:15.9px;height:15.9px;border:1px solid #8f8f8f;border-radius:1px;background:linear-gradient(135deg,#d4d8de,#eef1f5 60%,#ffffff);box-shadow:inset 0 0 0 1px #f2f4f6, inset 0 0 0 2px #b9bdc4"></div>
<div class="t d" style="top:523.72px;letter-spacing:-0.23px;left:690px;">Масштабировать колесиком мыши</div>
<div style="left:670.8px;top:547.42px;width:15.9px;height:15.9px;border:1px solid #8f8f8f;border-radius:1px;background:linear-gradient(135deg,#d4d8de,#eef1f5 60%,#ffffff);box-shadow:inset 0 0 0 1px #f2f4f6, inset 0 0 0 2px #b9bdc4"></div>
<div class="t d" style="top:544.72px;letter-spacing:-0.11px;left:690px;">Центровка вида по месту щелчка мыши</div>
<div style="left:670.8px;top:568.42px;width:15.9px;height:15.9px;border:1px solid #8f8f8f;border-radius:1px;background:linear-gradient(135deg,#d4d8de,#eef1f5 60%,#ffffff);box-shadow:inset 0 0 0 1px #f2f4f6, inset 0 0 0 2px #b9bdc4"></div>
<svg style="left:673.5px;top:570.38px;" width="11.4" height="12" viewBox="0 0 7.6 8"><path d="M1.3 4.3 L3.0 6.7 L6.2 0.9" fill="none" stroke="#363d6e" stroke-width="1.2" stroke-linecap="round" stroke-linejoin="round"/></svg>
<div class="t d" style="top:565.72px;letter-spacing:-0.09px;left:690px;">Включить захват рисования</div>
<div style="left:670.8px;top:589.42px;width:15.9px;height:15.9px;border:1px solid #8f8f8f;border-radius:1px;background:linear-gradient(135deg,#d4d8de,#eef1f5 60%,#ffffff);box-shadow:inset 0 0 0 1px #f2f4f6, inset 0 0 0 2px #b9bdc4"></div>
<svg style="left:673.5px;top:591.38px;" width="11.4" height="12" viewBox="0 0 7.6 8"><path d="M1.3 4.3 L3.0 6.7 L6.2 0.9" fill="none" stroke="#363d6e" stroke-width="1.2" stroke-linecap="round" stroke-linejoin="round"/></svg>
<div class="t d" style="top:586.72px;letter-spacing:0.10px;left:690px;">Изменять жесткость круглой кисти на основе вертикального перемещения HUD</div>
<div style="left:670.8px;top:610.42px;width:15.9px;height:15.9px;border:1px solid #8f8f8f;border-radius:1px;background:linear-gradient(135deg,#d4d8de,#eef1f5 60%,#ffffff);box-shadow:inset 0 0 0 1px #f2f4f6, inset 0 0 0 2px #b9bdc4"></div>
<svg style="left:673.5px;top:612.38px;" width="11.4" height="12" viewBox="0 0 7.6 8"><path d="M1.3 4.3 L3.0 6.7 L6.2 0.9" fill="none" stroke="#363d6e" stroke-width="1.2" stroke-linecap="round" stroke-linejoin="round"/></svg>
<div class="t d" style="top:607.72px;letter-spacing:0.02px;left:690px;">Помещать или перетаскивать растровые изображения как смарт-объекты</div>
<div style="left:670.8px;top:631.42px;width:15.9px;height:15.9px;border:1px solid #8f8f8f;border-radius:1px;background:linear-gradient(135deg,#d4d8de,#eef1f5 60%,#ffffff);box-shadow:inset 0 0 0 1px #f2f4f6, inset 0 0 0 2px #b9bdc4"></div>
<svg style="left:673.5px;top:633.38px;" width="11.4" height="12" viewBox="0 0 7.6 8"><path d="M1.3 4.3 L3.0 6.7 L6.2 0.9" fill="none" stroke="#363d6e" stroke-width="1.2" stroke-linecap="round" stroke-linejoin="round"/></svg>
<div class="t d" style="top:628.72px;letter-spacing:0.08px;left:690px;">Привязать векторные инструменты и преобразования к пиксельной сетке</div>
<div style="left:651.15px;top:681.6px;width:700.5px;height:105.9px;border:1.3px solid #b2b2b2;border-radius:3px;box-shadow:1px 1px 0 rgba(255,255,255,.8), inset 1px 1px 0 rgba(255,255,255,.8)"></div>
<div style="left:671.1px;top:672px;width:139.5px;height:19.5px;background:#ededed"></div>
<div style="left:673.8px;top:673.8px;width:15.9px;height:15.9px;border:1px solid #8f8f8f;border-radius:1px;background:linear-gradient(135deg,#d4d8de,#eef1f5 60%,#ffffff);box-shadow:inset 0 0 0 1px #f2f4f6, inset 0 0 0 2px #b9bdc4"></div>
<div class="t d" style="top:671.4px;letter-spacing:0.06px;left:693px;">История изменений</div>
<div class="t dg" style="top:692.4px;letter-spacing:-0.05px;left:661.88px;">Сохранить записи отчета в:</div>
<div style="left:828.3px;top:694.2px;width:15.6px;height:15.6px;border:1px solid #9a9a9a;border-radius:50%;background:radial-gradient(circle at 40% 40%,#f6f6f6,#e9e9e9 60%,#dcdcdc)"></div>
<div style="left:832.2px;top:698.1px;width:7.8px;height:7.8px;border-radius:50%;background:radial-gradient(circle at 40% 35%,#bdbdbd,#9c9c9c)"></div>
<div class="t dg" style="top:692.1px;letter-spacing:-0.32px;left:847.5px;color:#7e7e7e">Метаданные</div>
<div style="left:828.3px;top:715.2px;width:15.6px;height:15.6px;border:1px solid #9a9a9a;border-radius:50%;background:radial-gradient(circle at 40% 40%,#f6f6f6,#e9e9e9 60%,#dcdcdc)"></div>
<div class="t dg" style="top:712.65px;letter-spacing:0.01px;left:847.5px;color:#7e7e7e">Текстовый файл</div>
<div style="left:828.3px;top:735.9px;width:15.6px;height:15.6px;border:1px solid #9a9a9a;border-radius:50%;background:radial-gradient(circle at 40% 40%,#f6f6f6,#e9e9e9 60%,#dcdcdc)"></div>
<div class="t dg" style="top:733.5px;letter-spacing:-0.32px;left:847.5px;color:#7e7e7e">Оба</div>
<div style="left:958.88px;top:714.9px;width:120px;height:16.65px;border:1px solid #adb2b5;border-radius:3.5px;background:#f4f4f4;box-shadow:inset 0 0 0 1px rgba(255,255,255,.9)"></div>
<div class="t dg dis" style="top:713.55px;letter-spacing:-0.18px;left:989.25px;">Выбрать...</div>
<div class="t dg" style="top:759.9px;letter-spacing:-0.15px;left:693px;">Записывать в журнал:</div>
<div style="left:826.8px;top:760.2px;width:117.6px;height:20.7px;background:#fff;border:1px solid #a8a8a8;border-radius:1.5px"></div>
<div class="t dg" style="top:760.95px;letter-spacing:-0.13px;left:835.5px;color:#707070">Только сеансы</div>
<div style="left:921.3px;top:762.3px;width:1.05px;height:16.5px;background:#e0e0e0"></div>
<svg style="left:929.55px;top:768.45px;" width="8.1" height="4.5" viewBox="0 0 5.4 3"><path d="M0 0H5.4L2.7 3z" fill="#555"/></svg>
<div style="left:908.25px;top:800.55px;width:188.62px;height:17.85px;border:1px solid #707070;border-radius:3.5px;background:linear-gradient(#f3f3f3 0%,#ececec 48%,#dedede 52%,#d0d0d0 100%);box-shadow:inset 0 0 0 1px rgba(255,255,255,.85)"></div>
<div class="t b" style="top:800.25px;letter-spacing:-0.06px;left:918px;">Восстановить все сообщения</div>
<div style="left:1369.65px;top:238.8px;width:120px;height:17.7px;border:1px solid #3a7cae;border-radius:3.5px;background:linear-gradient(#eefaff 0%,#d8f1fd 48%,#b9e4f8 52%,#a5d9f3 100%);box-shadow:inset 0 0 0 1px rgba(80,200,245,.75)"></div>
<div class="t b" style="top:238.5px;letter-spacing:-0.32px;left:1421.29px;">OK</div>
<div style="left:1369.65px;top:267.15px;width:120px;height:17.7px;border:1px solid #707070;border-radius:3.5px;background:linear-gradient(#f3f3f3 0%,#ececec 48%,#dedede 52%,#d0d0d0 100%);box-shadow:inset 0 0 0 1px rgba(255,255,255,.85)"></div>
<div class="t b" style="top:267px;letter-spacing:-0.32px;left:1408.31px;">Отмена</div>
<div style="left:1369.65px;top:294.6px;width:120px;height:18.45px;border:1px solid #707070;border-radius:3.5px;background:linear-gradient(#f3f3f3 0%,#ececec 48%,#dedede 52%,#d0d0d0 100%);box-shadow:inset 0 0 0 1px rgba(255,255,255,.85)"></div>
<div class="t b" style="top:294.9px;letter-spacing:-0.32px;left:1413.27px;">Назад</div>
<div style="left:1369.65px;top:322.65px;width:120px;height:18.75px;border:1px solid #707070;border-radius:3.5px;background:linear-gradient(#f3f3f3 0%,#ececec 48%,#dedede 52%,#d0d0d0 100%);box-shadow:inset 0 0 0 1px rgba(255,255,255,.85)"></div>
<div class="t b" style="top:323.1px;letter-spacing:-0.21px;left:1409.55px;">Вперед</div>
</div>
</body></html>
